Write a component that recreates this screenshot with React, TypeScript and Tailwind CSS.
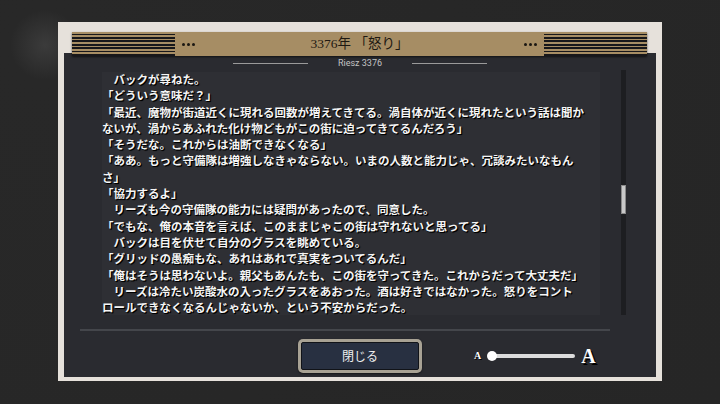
const lines = [
  "　バックが尋ねた。",
  "「どういう意味だ？」",
  "「最近、魔物が街道近くに現れる回数が増えてきてる。渦自体が近くに現れたという話は聞か",
  "ないが、渦からあふれた化け物どもがこの街に迫ってきてるんだろう」",
  "「そうだな。これからは油断できなくなる」",
  "「ああ。もっと守備隊は増強しなきゃならない。いまの人数と能力じゃ、冗談みたいなもん",
  "さ」",
  "「協力するよ」",
  "　リーズも今の守備隊の能力には疑問があったので、同意した。",
  "「でもな、俺の本音を言えば、このままじゃこの街は守れないと思ってる」",
  "　バックは目を伏せて自分のグラスを眺めている。",
  "「グリッドの愚痴もな、あれはあれで真実をついてるんだ」",
  "「俺はそうは思わないよ。親父もあんたも、この街を守ってきた。これからだって大丈夫だ」",
  "　リーズは冷たい炭酸水の入ったグラスをあおった。酒は好きではなかった。怒りをコント",
  "ロールできなくなるんじゃないか、という不安からだった。",
];

const Stripes = () => (
  <div className="w-[103px] h-full bg-[repeating-linear-gradient(to_bottom,#a68d64_0px,#a68d64_1.5px,#17171a_1.5px,#17171a_3.4px)]" />
);

const Dots = () => (
  <div className="flex gap-[2px]">
    <span className="w-[3px] h-[3px] rounded-full bg-[#1a1712]" />
    <span className="w-[3px] h-[3px] rounded-full bg-[#1a1712]" />
    <span className="w-[3px] h-[3px] rounded-full bg-[#1a1712]" />
  </div>
);

const App = () => {
  return (
    <div className="w-[720px] h-[404px] overflow-hidden bg-[radial-gradient(circle_at_45px_45px,#3b3b3b_0px,#282828_35px,#262626_100%)] pt-[22px] pl-[58px]">
      <div className="w-[604px] h-[359px] bg-[#e6e1db] pt-[10px] px-[6px] pb-[4px] flex flex-col">
        {/* Header bar */}
        <div className="relative z-10 h-[24px] ml-[8px] mr-[9px] flex items-center bg-[#a68d64] shadow-[0_1px_2px_rgba(0,0,0,0.6)]">
          <Stripes />
          <div className="ml-[7px]">
            <Dots />
          </div>
          <div className="flex-1 text-center text-[13.5px] text-[#1e1912] font-['Liberation_Serif','Noto_Sans_CJK_JP',serif] leading-none">
            3376年 「怒り」
          </div>
          <div className="mr-[7px]">
            <Dots />
          </div>
          <Stripes />
        </div>

        {/* Dark panel */}
        <div className="-mt-[3px] flex-1 bg-[#2a2b30] flex flex-col">
          {/* Subtitle */}
          <div className="mt-[3px] h-[14px] flex items-center justify-center">
            <div className="w-[75px] h-[1px] bg-[#9a9a9a]" />
            <span className="mx-[30px] text-[9px] text-[#c4c4c4] font-['Roboto',sans-serif] leading-none">
              Riesz 3376
            </span>
            <div className="w-[75px] h-[1px] bg-[#9a9a9a]" />
          </div>

          {/* Text + scrollbar */}
          <div className="h-[245px] flex">
            <div className="ml-[38px] mt-[2px] h-[243px] w-[498px] bg-[#2e2f34] overflow-hidden">
              <div className="-mt-[1px] font-['Noto_Sans_CJK_JP',sans-serif] font-bold text-[11.5px] leading-[16.3px] text-[#f5f5f5] [text-shadow:1px_1px_1px_#000,1px_1px_0_#000]">
                {lines.map((l, i) => (
                  <div key={i} className="whitespace-nowrap">
                    {l}
                  </div>
                ))}
              </div>
            </div>
            <div className="ml-[21px] w-[5px] h-[245px] bg-[#1d1e21] flex flex-col">
              <div className="mt-[115px] h-[29px] w-[5px] bg-[#c9c9c9] border border-[#8a8a8a]" />
            </div>
          </div>

          {/* Divider */}
          <div className="mt-[14px] ml-[16px] w-[530px] h-[2px] bg-[#44464b]" />

          {/* Bottom controls */}
          <div className="mt-[8px] flex items-center">
            <button className="ml-[234px] w-[124px] h-[34px] rounded-[5px] bg-[#a8a294] p-[3px] shadow-[0_1px_2px_rgba(0,0,0,0.5)]">
              <div className="w-full h-full rounded-[2px] bg-[#283041] border border-[#111318] flex items-center justify-center text-[12px] text-[#eeeeee] font-['Noto_Sans_CJK_JP',sans-serif]">
                閉じる
              </div>
            </button>
            <span className="ml-[52px] text-[10px] font-bold text-white font-['Liberation_Serif',serif] leading-none [text-shadow:1px_1px_0_#000]">
              A
            </span>
            <div className="flex items-center">
              <div className="relative z-10 ml-[6px] w-[10px] h-[10px] rounded-full bg-white" />
              <div className="-ml-[5px] w-[83px] h-[4px] rounded-full bg-[#dcdcdc]" />
            </div>
            <span className="ml-[6px] text-[20px] font-bold text-white font-['Liberation_Serif',serif] leading-none [text-shadow:2px_2px_0_#000]">
              A
            </span>
          </div>
        </div>
      </div>
    </div>
  );
};

export default App;
